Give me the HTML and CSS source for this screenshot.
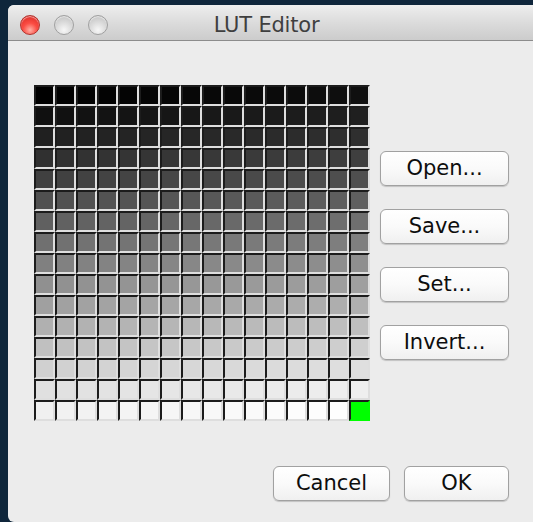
FILE: index.html
```html
<!DOCTYPE html>
<html lang="en">
<head>
<meta charset="utf-8">
<title>LUT Editor</title>
<link rel="stylesheet" href="styles.css">
</head>
<body>
  <div class="window">
    <div class="titlebar">
      <div class="lights">
        <span class="light close"></span>
        <span class="light"></span>
        <span class="light"></span>
      </div>
      <div class="title">LUT Editor</div>
    </div>
    <div class="content">
      <div class="main-row">
        <div class="lut-grid" id="lut"></div>
        <div class="side">
          <button class="btn">Open...</button>
          <button class="btn">Save...</button>
          <button class="btn">Set...</button>
          <button class="btn">Invert...</button>
        </div>
      </div>
      <div class="footer">
        <button class="btn cancel">Cancel</button>
        <button class="btn ok">OK</button>
      </div>
    </div>
  </div>
  <script src="script.js"></script>
</body>
</html>
```

FILE: styles.css
```css
html, body {
  margin: 0;
  padding: 0;
}

body {
  width: 533px;
  height: 522px;
  overflow: hidden;
  background: #0f263b;
  font-family: "DejaVu Sans", "Liberation Sans", sans-serif;
}

.window {
  margin: 5px 0 0 8px;
  width: 525px;
  height: 517px;
  background: #ececec;
  border-radius: 6px 0 0 6px;
  overflow: hidden;
  display: flex;
  flex-direction: column;
}

/* title bar */
.titlebar {
  position: relative;
  height: 35px;
  flex: none;
  border-bottom: 1px solid #8c8c8c;
  background: linear-gradient(#eeeeee, #dadada 55%, #cccccc);
  display: flex;
  align-items: center;
  justify-content: center;
  padding-right: 8px;
  box-sizing: content-box;
}

.lights {
  position: absolute;
  left: 12px;
  top: 10px;
  display: flex;
  gap: 14px;
}

.light {
  width: 20px;
  height: 20px;
  border-radius: 50%;
  box-sizing: border-box;
  border: 1px solid #a0a0a0;
  background: radial-gradient(circle at 50% 78%, #f7f7f7 0%, #dcdcdc 45%, #bcbcbc 100%);
  box-shadow: inset 0 1px 1px rgba(255, 255, 255, 0.6);
}

.light.close {
  border-color: #b0332d;
  background: radial-gradient(circle at 50% 78%, #ffb0a5 0%, #fb4d44 42%, #d6241e 100%);
}

.title {
  margin-top: 4px;
  font-size: 21px;
  color: #3f3f3f;
  letter-spacing: -0.2px;
}

/* dialog body */
.content {
  padding: 44px 24px 0 26px;
  display: flex;
  flex-direction: column;
}

.main-row {
  display: flex;
  gap: 10px;
}

.lut-grid {
  display: grid;
  grid-template-columns: repeat(16, 21px);
  grid-auto-rows: 21px;
  width: 336px;
  height: 336px;
}

.cell {
  box-sizing: border-box;
  border-left: 2px solid #1c1c1c;
  border-top: 2px solid #1c1c1c;
  border-right: 2px solid #dedede;
  border-bottom: 2px solid #dedede;
}

.cell.selected {
  background: #00ff00;
  border-right-color: #00ff00;
  border-bottom-color: #00ff00;
}

.side {
  display: flex;
  flex-direction: column;
  gap: 23px;
  padding-top: 66px;
}

.btn {
  width: 129px;
  height: 35px;
  margin: 0;
  padding: 0;
  box-sizing: border-box;
  border: 1px solid #a1a1a1;
  border-radius: 6px;
  background: linear-gradient(#ffffff, #fafafa 50%, #f0f0f0);
  box-shadow: 0 1px 1px rgba(0, 0, 0, 0.18);
  font-family: "DejaVu Sans", "Liberation Sans", sans-serif;
  font-size: 21px;
  color: #0d0d0d;
  line-height: 33px;
  text-align: center;
}

.footer {
  display: flex;
  justify-content: flex-end;
  gap: 14px;
  margin-top: 45px;
}

.btn.cancel {
  width: 117px;
}

.btn.ok {
  width: 105px;
}
```

FILE: script.js
```js
// Fill the 16x16 lookup table: one cell per entry, grey ramp 0..255,
// with the currently picked entry (the last one) highlighted.
var grid = document.getElementById('lut');
for (var i = 0; i < 256; i++) {
  var cell = document.createElement('div');
  cell.className = 'cell';
  if (i === 255) {
    cell.className += ' selected';
  } else {
    cell.style.backgroundColor = 'rgb(' + i + ',' + i + ',' + i + ')';
  }
  grid.appendChild(cell);
}
```
